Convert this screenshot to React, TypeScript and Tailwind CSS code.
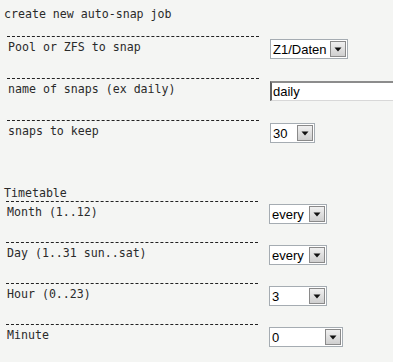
import React from "react";

type Row = {
  label: string;
  kind: "select" | "input";
  value: string;
  width: string;
};

const jobRows: Row[] = [
  { label: "Pool or ZFS to snap", kind: "select", value: "Z1/Daten", width: "w-[78px]" },
  { label: "name of snaps (ex daily)", kind: "input", value: "daily", width: "w-[200px]" },
  { label: "snaps to keep", kind: "select", value: "30", width: "w-[45px]" },
];

const timeRows: Row[] = [
  { label: "Month (1..12)", kind: "select", value: "every", width: "w-[58px]" },
  { label: "Day (1..31 sun..sat)", kind: "select", value: "every", width: "w-[58px]" },
  { label: "Hour (0..23)", kind: "select", value: "3", width: "w-[58px]" },
  { label: "Minute", kind: "select", value: "0", width: "w-[74px]" },
];

function FakeSelect({ value, width }: { value: string; width: string }) {
  return (
    <div
      className={`${width} h-[20px] flex items-center justify-between bg-white border border-[#a5acb2] font-['Liberation_Sans',Arial,sans-serif] text-[13px] text-black`}
    >
      <span className="pl-[2px] leading-none">{value}</span>
      <span className="mr-[1px] w-[16px] h-[16px] flex items-center justify-center border border-[#8a8a8a] bg-gradient-to-b from-[#f0f0f0] to-[#cfcfcf]">
        <svg width="8" height="5" viewBox="0 0 8 5">
          <path d="M0.5 0.5 H7.5 L4 4.5 Z" fill="#111" />
        </svg>
      </span>
    </div>
  );
}

function FakeInput({ value, width }: { value: string; width: string }) {
  return (
    <div
      className={`${width} h-[20px] flex items-center bg-white border-t-2 border-l-2 border-t-[#8c8c8c] border-l-[#5f5f5f] border-b border-r border-b-[#d8d8d8] border-r-[#d8d8d8] font-['Liberation_Sans',Arial,sans-serif] text-[13px] text-black`}
    >
      <span className="pl-[1px] leading-none">{value}</span>
    </div>
  );
}

function FormRow({ row, height, left }: { row: Row; height: string; left: string }) {
  return (
    <div className={`flex ${height}`}>
      <div className={`${left} w-[252px] shrink-0 border-t border-dashed border-[#222] pt-[2px] pl-[1px]`}>
        <span className="leading-[16px]">{row.label}</span>
      </div>
      <div className="ml-[11px] shrink-0 pt-[2px] border-t border-transparent">
        {row.kind === "select" ? (
          <FakeSelect value={row.value} width={row.width} />
        ) : (
          <FakeInput value={row.value} width={row.width} />
        )}
      </div>
    </div>
  );
}

export default function App() {
  return (
    <div className="w-[393px] h-[362px] overflow-hidden bg-[#f4f5f3] font-['DejaVu_Sans_Mono',monospace] text-[11.6px] text-[#2a2a2a]">
      <div className="pt-[6px] pl-[4px] leading-[16px]">create new auto-snap job</div>

      <div className="mt-[14px]">
        {jobRows.map((row) => (
          <FormRow key={row.label} row={row} height="h-[42px]" left="ml-[7px]" />
        ))}
      </div>

      <div className="mt-[23px] pl-[4px] leading-[16px]">Timetable</div>

      <div>
        {timeRows.map((row) => (
          <FormRow key={row.label} row={row} height="h-[41px]" left="ml-[6px]" />
        ))}
      </div>
    </div>
  );
}
